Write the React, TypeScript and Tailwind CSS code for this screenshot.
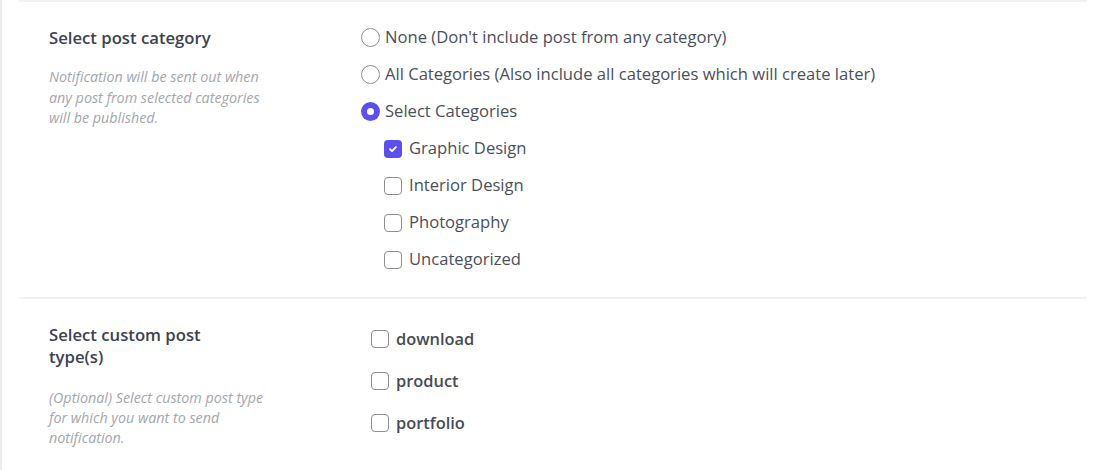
import { useState } from 'react';

const font = { fontFamily: '"Open Sans", "Noto Sans", Arial, sans-serif' };

const Radio = ({ checked, label, onClick }: { checked: boolean; label: string; onClick: () => void }) => (
  <label onClick={onClick} className="flex items-center h-[37px] cursor-pointer">
    {checked ? (
      <span className="w-[19px] h-[19px] rounded-full bg-[#5b4fef] flex items-center justify-center shrink-0">
        <span className="w-[7px] h-[7px] rounded-full bg-white" />
      </span>
    ) : (
      <span className="w-[19px] h-[19px] rounded-full border-[1.5px] border-[#8c8f94] bg-white shrink-0" />
    )}
    <span className="ml-[5px] text-[16.6px] text-[#4a4f5c]">{label}</span>
  </label>
);

const Check = ({ checked, label, onClick, bold }: { checked: boolean; label: string; onClick: () => void; bold?: boolean }) => (
  <label onClick={onClick} className="flex items-center cursor-pointer h-full">
    {checked ? (
      <span className="w-[18px] h-[18px] rounded-[4px] bg-[#5b4fef] flex items-center justify-center shrink-0">
        <svg viewBox="0 0 12 12" className="w-[10px] h-[10px]" fill="none" stroke="white" strokeWidth="2.2" strokeLinecap="round" strokeLinejoin="round">
          <path d="M2.5 6.3l2.3 2.2 4.7-4.8" />
        </svg>
      </span>
    ) : (
      <span className="w-[18px] h-[18px] rounded-[4px] border-[1.5px] border-[#8c8f94] bg-white shrink-0" />
    )}
    <span className={bold ? 'ml-[7px] text-[16.4px] font-semibold text-[#464b58]' : 'ml-[7px] text-[16.6px] text-[#4a4f5c]'}>{label}</span>
  </label>
);

const App = () => {
  const [mode, setMode] = useState('select');
  const [cats, setCats] = useState<Record<string, boolean>>({ 'Graphic Design': true });
  const [types, setTypes] = useState<Record<string, boolean>>({});

  return (
    <div style={font} className="w-[1101px] h-[470px] bg-white border-l-2 border-[#ececec] overflow-hidden">
      <div className="ml-[17px] w-[1068px]">
        {/* Post category */}
        <div className="flex border-t-2 border-[#f1f1f1] pt-[17px] pb-[19px] border-b-2">
          <div className="w-[342px] pl-[30px] pt-[7px] shrink-0">
            <h3 className="text-[16.7px] font-semibold text-[#3d4250] leading-[24px]">Select post category</h3>
            <p className="mt-[17px] w-[225px] text-[14.3px] italic text-[#a3a6ae] leading-[20.5px]">
              Notification will be sent out when any post from selected categories will be published.
            </p>
          </div>
          <div>
            <Radio checked={mode === 'none'} onClick={() => setMode('none')} label="None (Don't include post from any category)" />
            <Radio checked={mode === 'all'} onClick={() => setMode('all')} label="All Categories (Also include all categories which will create later)" />
            <Radio checked={mode === 'select'} onClick={() => setMode('select')} label="Select Categories" />
            <div className="pl-[23px]">
              {['Graphic Design', 'Interior Design', 'Photography', 'Uncategorized'].map(c => (
                <div key={c} className="h-[37px]">
                  <Check checked={!!cats[c]} onClick={() => setCats(p => ({ ...p, [c]: !p[c] }))} label={c} />
                </div>
              ))}
            </div>
          </div>
        </div>

        {/* Custom post types */}
        <div className="flex pt-[19px]">
          <div className="w-[352px] pl-[30px] pt-[6px] shrink-0">
            <h3 className="w-[180px] text-[16.7px] font-semibold text-[#3d4250] leading-[22px]">Select custom post type(s)</h3>
            <p className="mt-[20px] w-[228px] text-[14.3px] italic text-[#a3a6ae] leading-[20px]">
              (Optional) Select custom post type for which you want to send notification.
            </p>
          </div>
          <div>
            {['download', 'product', 'portfolio'].map(t => (
              <div key={t} className="h-[42px]">
                <Check bold checked={!!types[t]} onClick={() => setTypes(p => ({ ...p, [t]: !p[t] }))} label={t} />
              </div>
            ))}
          </div>
        </div>
      </div>
    </div>
  );
};

export default App;
